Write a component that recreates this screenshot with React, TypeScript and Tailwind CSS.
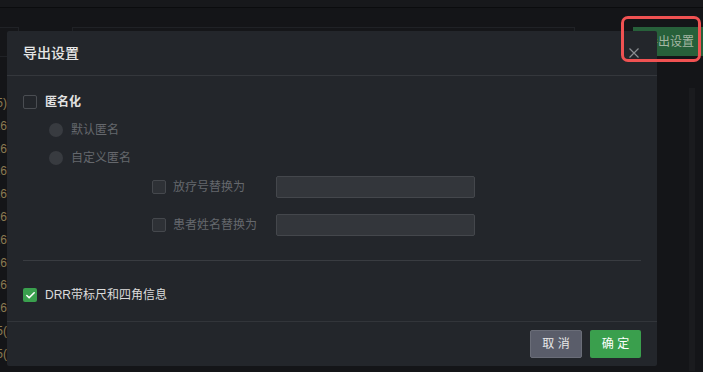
import { Check } from "lucide-react";

const FONT = "font-['Liberation_Sans','Noto_Sans_CJK_SC',sans-serif]";

const SIDE_LINES = ["(5)", "126", "126", "126", "126", "126", "126", "126", "126", "126", "(5(", "(5(", "-40)"];

function Radio({ label }: { label: string }) {
  return (
    <div className="flex h-[28px] items-center pl-[26px]">
      <span className="h-[14px] w-[14px] rounded-full bg-[#383b40]" />
      <span className="ml-[8px] text-[12px] text-[#65686d]">{label}</span>
    </div>
  );
}

function ReplaceRow({ label }: { label: string }) {
  return (
    <div className="flex h-[22px] items-center">
      <span className="ml-[129px] h-[14px] w-[14px] rounded-[2px] border border-[#45484d] bg-[#2e3136]" />
      <span className="ml-[7px] w-[103px] text-[12px] text-[#65686d]">{label}</span>
      <div className="h-[22px] w-[199px] rounded-[2px] border border-[#44474c] bg-[#33363b]" />
    </div>
  );
}

export default function App() {
  return (
    <div className={`relative h-[372px] w-[703px] overflow-hidden bg-[#141518] ${FONT}`}>
      {/* page behind the mask */}
      <div className="h-[8px] border-b border-[#0b0c0e] bg-[#17181b]" />
      <div className="flex h-[80px] items-start pt-[19px]">
        <div className="ml-[-2px] h-[30px] w-[21px] border border-[#202226] bg-[#151619]" />
        <div className="ml-[53px] h-[30px] w-[503px] border border-[#202226] bg-[#151619]" />
        <div className="ml-auto flex h-[29px] w-[70px] items-center bg-[#27603a] pl-[13px] text-[12px] text-[#a3b6a3]">
          导出设置
        </div>
      </div>
      <div className="flex h-[283px]">
        <div className="flex w-[7px] flex-col items-end overflow-hidden pt-[4px] text-[12px] leading-[22.8px] text-[#8c7b52]">
          {SIDE_LINES.map((t, i) => (
            <span key={i} className="whitespace-nowrap">
              {t}
            </span>
          ))}
        </div>
        <div className="flex-1" />
        <div className="w-[6px] bg-[#1a1b1e]" />
        <div className="w-[8px]" />
      </div>

      {/* modal */}
      <div className="absolute left-[7px] top-[31px] flex h-[335px] w-[650px] flex-col rounded-[2px] bg-[#23262b]">
        <div className="flex h-[45px] items-center border-b border-[#34373c] pl-[16px] pr-[18px]">
          <span className="text-[14px] font-medium text-[#e6e6e6]">导出设置</span>
          <svg className="ml-auto" width="10" height="10" viewBox="0 0 10 10">
            <path d="M0.5 0.5 L9.5 9.5 M9.5 0.5 L0.5 9.5" stroke="#8a8d91" strokeWidth="1.2" fill="none" />
          </svg>
        </div>

        <div className="flex flex-1 flex-col px-[16px] pt-[12px]">
          <div className="flex h-[28px] items-center">
            <span className="h-[14px] w-[14px] rounded-[2px] border border-[#4a4d52]" />
            <span className="ml-[8px] text-[12px] font-bold text-[#e2e2e2]">匿名化</span>
          </div>
          <Radio label="默认匿名" />
          <Radio label="自定义匿名" />
          <div className="mt-[4px] flex flex-col gap-[16px]">
            <ReplaceRow label="放疗号替换为" />
            <ReplaceRow label="患者姓名替换为" />
          </div>
          <div className="mt-[24px] h-px bg-[#393c41]" />
          <div className="mt-[20px] flex h-[28px] items-center">
            <span className="flex h-[14px] w-[14px] items-center justify-center rounded-[2px] bg-[#3aa04e]">
              <Check size={11} strokeWidth={3.5} className="text-white" />
            </span>
            <span className="ml-[8px] text-[12px] text-[#dcdcdc]">DRR带标尺和四角信息</span>
          </div>
        </div>

        <div className="flex h-[45px] items-center justify-end gap-[8px] border-t border-[#32353a] pr-[16px]">
          <button className="h-[28px] w-[52px] rounded-[2px] border border-[#6a6d78] bg-[#5a5d6a] text-[12px] text-[#e8e8e8]">
            取 消
          </button>
          <button className="h-[28px] w-[51px] rounded-[2px] bg-[#3a9f4d] text-[12px] text-white">
            确 定
          </button>
        </div>
      </div>

      {/* highlight */}
      <div className="absolute left-[621px] top-[16px] h-[46px] w-[80px] rounded-[7px] border-[3px] border-[#f05252]" />
    </div>
  );
}
